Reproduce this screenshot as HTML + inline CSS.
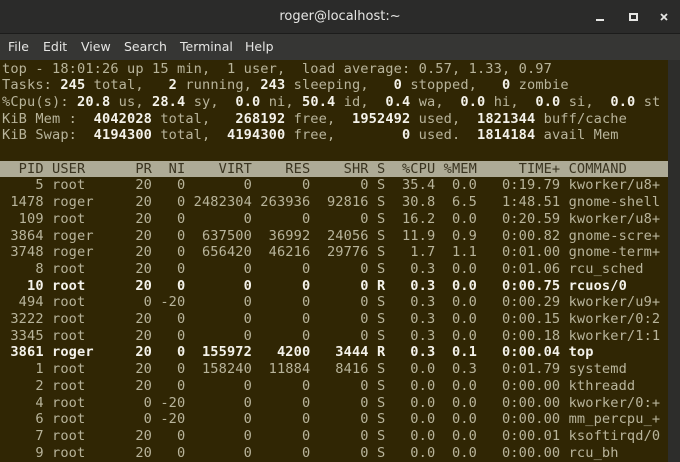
<!DOCTYPE html>
<html><head><meta charset="utf-8"><style>
*{margin:0;padding:0}
body{width:680px;height:462px;overflow:hidden;background:#2d2d2b;font-family:"DejaVu Sans","Liberation Sans",sans-serif;position:relative}
#title{position:absolute;left:0;top:0;width:680px;height:33px;background:#2b2b2a;border-bottom:1px solid #1c1c1b;color:#e6e6e4;font-size:13px;text-align:center;line-height:33px}
#menu{position:absolute;left:0;top:34px;width:680px;height:26px;background:#363634;color:#e6e6e4;font-size:12.5px;line-height:26px}
#menu span{position:absolute;top:0}
#term{position:absolute;left:0;top:60px;width:668px;height:402px;background:#302604}
#sb{position:absolute;left:668px;top:60px;width:12px;height:402px;background:#2d2d2b}
pre{position:absolute;left:2px;top:0.5px;font-family:"DejaVu Sans Mono","Liberation Mono",monospace;font-size:13.65px;line-height:16.7px;color:#b8b49b;letter-spacing:0.12px}
b{color:#f4f2ea}
.hd{display:inline-block;background:#aeab96;color:#3a3420;width:666px;margin-left:-2px;padding-left:2px}
</style></head><body>
<div id="title">roger@localhost:~</div>
<svg style="position:absolute;left:590px;top:10px" width="90" height="16">
<rect x="6" y="9" width="8" height="2" fill="#e6e6e4"/>
<rect x="40" y="4" width="7" height="6" fill="none" stroke="#e6e6e4" stroke-width="2"/>
<path d="M71 4L77 10M77 4L71 10" stroke="#e6e6e4" stroke-width="1.8"/>
</svg>
<div id="menu"><span style="left:8px">File</span><span style="left:43px">Edit</span><span style="left:81px">View</span><span style="left:124px">Search</span><span style="left:180px">Terminal</span><span style="left:245px">Help</span></div>
<div id="term"><pre>top - 18:01:26 up 15 min,  1 user,  load average: 0.57, 1.33, 0.97
Tasks: <b>245</b> total,   <b>2</b> running, <b>243</b> sleeping,   <b>0</b> stopped,   <b>0</b> zombie
%Cpu(s): <b>20.8</b> us, <b>28.4</b> sy,  <b>0.0</b> ni, <b>50.4</b> id,  <b>0.4</b> wa,  <b>0.0</b> hi,  <b>0.0</b> si,  <b>0.0</b> st
KiB Mem :  <b>4042028</b> total,   <b>268192</b> free,  <b>1952492</b> used,  <b>1821344</b> buff/cache
KiB Swap:  <b>4194300</b> total,  <b>4194300</b> free,        <b>0</b> used.  <b>1814184</b> avail Mem

<span class="hd">  PID USER      PR  NI    VIRT    RES    SHR S  %CPU %MEM     TIME+ COMMAND</span>
    5 root      20   0       0      0      0 S  35.4  0.0   0:19.79 kworker/u8+
 1478 roger     20   0 2482304 263936  92816 S  30.8  6.5   1:48.51 gnome-shell
  109 root      20   0       0      0      0 S  16.2  0.0   0:20.59 kworker/u8+
 3864 roger     20   0  637500  36992  24056 S  11.9  0.9   0:00.82 gnome-scre+
 3748 roger     20   0  656420  46216  29776 S   1.7  1.1   0:01.00 gnome-term+
    8 root      20   0       0      0      0 S   0.3  0.0   0:01.06 rcu_sched
<b>   10 root      20   0       0      0      0 R   0.3  0.0   0:00.75 rcuos/0</b>
  494 root       0 -20       0      0      0 S   0.3  0.0   0:00.29 kworker/u9+
 3222 root      20   0       0      0      0 S   0.3  0.0   0:00.15 kworker/0:2
 3345 root      20   0       0      0      0 S   0.3  0.0   0:00.18 kworker/1:1
<b> 3861 roger     20   0  155972   4200   3444 R   0.3  0.1   0:00.04 top</b>
    1 root      20   0  158240  11884   8416 S   0.0  0.3   0:01.79 systemd
    2 root      20   0       0      0      0 S   0.0  0.0   0:00.00 kthreadd
    4 root       0 -20       0      0      0 S   0.0  0.0   0:00.00 kworker/0:+
    6 root       0 -20       0      0      0 S   0.0  0.0   0:00.00 mm_percpu_+
    7 root      20   0       0      0      0 S   0.0  0.0   0:00.01 ksoftirqd/0
    9 root      20   0       0      0      0 S   0.0  0.0   0:00.00 rcu_bh</pre></div>
<div id="sb"></div>
</body></html>
